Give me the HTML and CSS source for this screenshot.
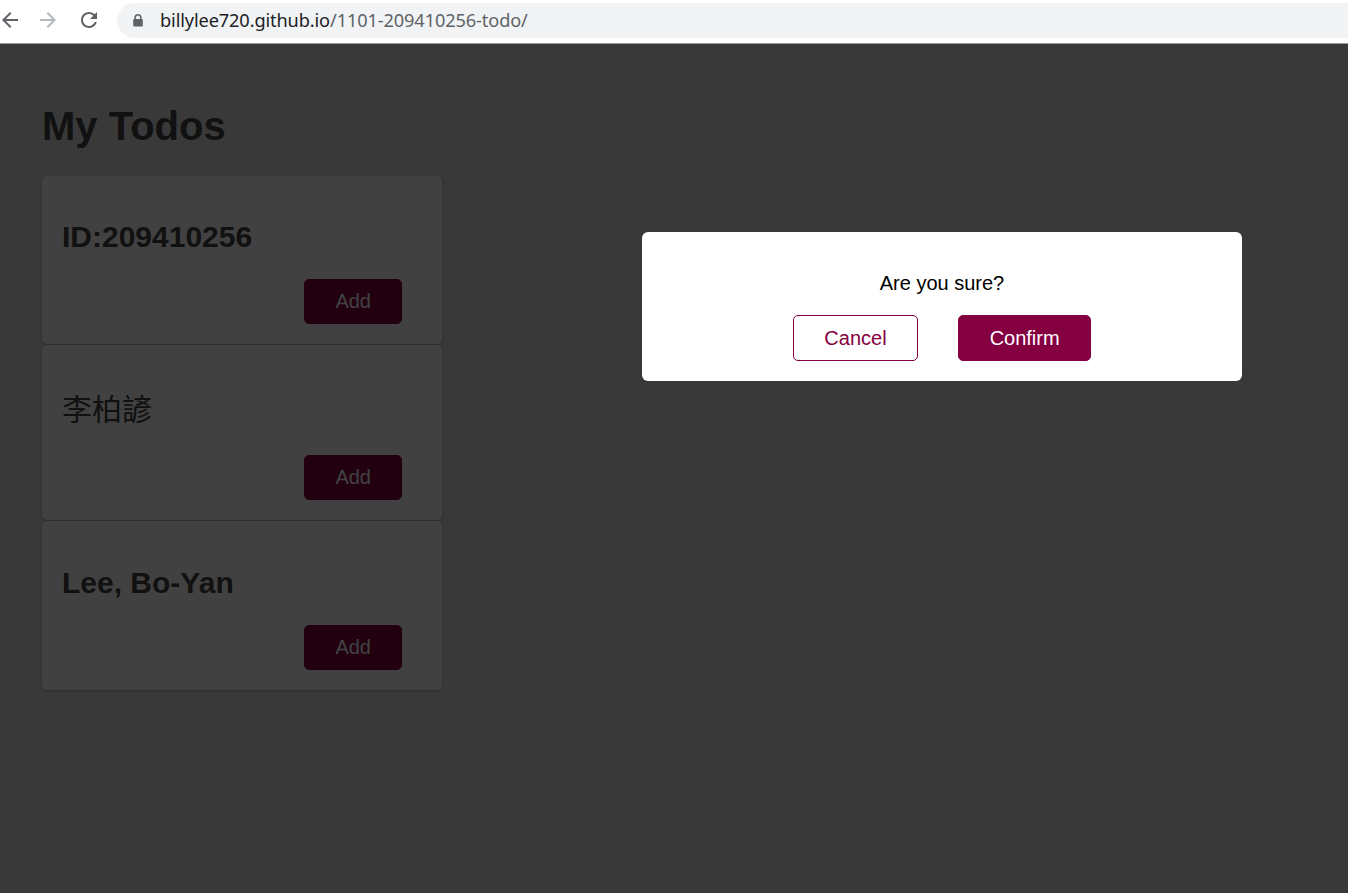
FILE: index.html
```html
<!DOCTYPE html>
<html lang="en">
<head>
<meta charset="utf-8">
<title>My Todos</title>
<link rel="stylesheet" href="styles.css">
</head>
<body>
<header class="browser-bar">
  <nav class="nav">
    <svg class="nav-icon back" viewBox="0 0 24 24"><path d="M20 11H7.83l5.59-5.59L12 4l-8 8 8 8 1.41-1.41L7.83 13H20v-2z"/></svg>
    <svg class="nav-icon forward" viewBox="0 0 24 24"><path d="M12 4l-1.41 1.41L16.17 11H4v2h12.17l-5.58 5.59L12 20l8-8z"/></svg>
    <svg class="nav-icon reload" viewBox="0 0 24 24"><path d="M17.65 6.35C16.2 4.9 14.21 4 12 4c-4.42 0-7.99 3.58-7.99 8s3.57 8 7.99 8c3.73 0 6.84-2.55 7.73-6h-2.08c-.82 2.33-3.04 4-5.65 4-3.31 0-6-2.69-6-6s2.69-6 6-6c1.66 0 3.14.69 4.22 1.78L13 11h7V4l-2.35 2.35z"/></svg>
  </nav>
  <div class="omnibox">
    <svg class="lock" viewBox="0 0 12 14"><path d="M3.2 6.5V4.6a2.8 2.8 0 0 1 5.6 0v1.9" fill="none" stroke="#5f6368" stroke-width="1.6"/><rect x="1.2" y="6" width="9.6" height="7.6" rx="1.2" fill="#5f6368"/></svg>
    <span class="url"><span class="host">billylee720.github.io</span><span class="path">/1101-209410256-todo/</span></span>
  </div>
</header>

<div class="viewport">
  <main class="app">
    <h1 class="page-title">My Todos</h1>
    <section class="card">
      <h2 class="card-title">ID:209410256</h2>
      <div class="card-actions"><button class="btn btn-add">Add</button></div>
    </section>
    <section class="card">
      <h2 class="card-title cjk">李柏諺</h2>
      <div class="card-actions"><button class="btn btn-add">Add</button></div>
    </section>
    <section class="card">
      <h2 class="card-title">Lee, Bo-Yan</h2>
      <div class="card-actions"><button class="btn btn-add">Add</button></div>
    </section>
  </main>

  <div class="overlay"></div>

  <div class="modal">
    <p class="modal-text">Are you sure?</p>
    <div class="modal-actions">
      <button class="btn btn-outline">Cancel</button>
      <button class="btn btn-primary">Confirm</button>
    </div>
  </div>
</div>
</body>
</html>
```

FILE: styles.css
```css
* { box-sizing: border-box; }

html, body {
  margin: 0;
  padding: 0;
  height: 100%;
  overflow: hidden;
}

body {
  font-family: "Liberation Sans", Arial, "Noto Sans CJK TC", sans-serif;
  background: #ffffff;
}

/* ---------- browser chrome ---------- */
.browser-bar {
  height: 44px;
  display: flex;
  align-items: center;
  background: #ffffff;
  border-bottom: 1px solid #9a9a9a;
  padding-bottom: 3px;
}

.nav {
  display: flex;
  align-items: center;
}

.nav-icon {
  width: 24px;
  height: 24px;
  display: block;
}

.back { margin-left: -2px; fill: #5f6368; }
.forward { margin-left: 14px; fill: #b4b7bb; }
.reload { margin-left: 17px; fill: #5f6368; }

.omnibox {
  flex: 1;
  margin-left: 16px;
  height: 35px;
  border-radius: 18px 0 0 18px;
  background: #f1f3f4;
  display: flex;
  align-items: center;
  padding-left: 15px;
}

.lock {
  width: 12px;
  height: 14px;
  display: block;
}

.url {
  margin-left: 16px;
  font-family: "Noto Sans", "Open Sans", sans-serif;
  font-size: 18.2px;
  letter-spacing: -0.12px;
}

.host { color: #202124; }
.path { color: #5f6368; }

/* ---------- page ---------- */
.viewport {
  position: relative;
  height: calc(100% - 44px);
  background: #dfdfdf;
}

.app {
  padding: 33px 42px 0;
}

.page-title {
  margin: 26.8px 0;
  font-size: 40px;
  font-weight: bold;
  color: #444;
}

.card {
  width: 400px;
  padding: 20px;
  margin-bottom: 1px;
  background: #ffffff;
  border-radius: 5px;
  box-shadow: 0 1px 3px rgba(0, 0, 0, 0.25);
}

.card-title {
  margin: 24.9px 0;
  font-size: 30px;
  font-weight: bold;
  color: #444;
}

.card-title.cjk {
  font-weight: 400;
  line-height: 40px;
}

.card-actions {
  display: flex;
  justify-content: flex-end;
  padding-right: 20px;
}

.btn {
  font-family: "Liberation Sans", Arial, sans-serif;
  font-size: 20px;
  padding: 10px 30px;
  border: 1px solid #850041;
  border-radius: 5px;
  line-height: 23px;
  cursor: pointer;
}

.btn-add {
  background: #850041;
  color: #ffffff;
}

/* ---------- modal ---------- */
.overlay {
  position: absolute;
  inset: 0;
  background: rgba(0, 0, 0, 0.745);
}

.modal {
  position: absolute;
  left: 642px;
  top: 188px;
  width: 600px;
  padding: 20px;
  background: #ffffff;
  border-radius: 6px;
  text-align: center;
}

.modal-text {
  margin: 20px 0;
  font-size: 20px;
  color: #000;
}

.modal-actions {
  display: flex;
  justify-content: center;
  gap: 40px;
}

.modal-actions .btn {
  padding: 10px 30.5px;
  line-height: 24px;
}

.btn-outline {
  background: #ffffff;
  color: #850041;
}

.btn-primary {
  background: #850041;
  color: #ffffff;
}
```
